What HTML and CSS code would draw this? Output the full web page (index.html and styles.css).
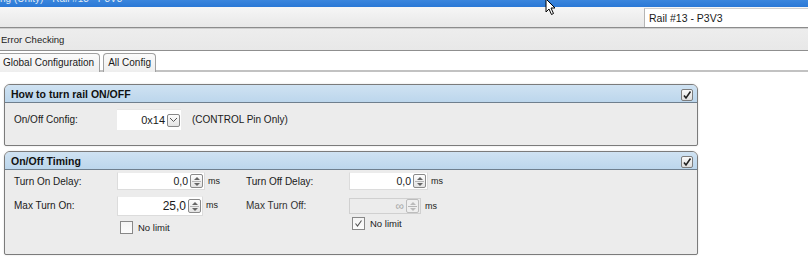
FILE: index.html
```html
<!DOCTYPE html>
<html>
<head>
<meta charset="utf-8">
<link rel="stylesheet" href="styles.css">
</head>
<body>
<div class="app">
  <div class="titlebar"><span class="title-text">ng (Unity) - Rail #13 - P3V3</span></div>
  <div class="toolbar">
    <div class="rail-select">Rail #13 - P3V3</div>
  </div>
  <div class="errbar">Error Checking</div>
  <div class="tabs">
    <div class="tab">Global Configuration</div>
    <div class="tab">All Config</div>
  </div>
  <div class="content">
    <div class="panel panel-onoff">
      <div class="panel-head">
        <span>How to turn rail ON/OFF</span>
        <span class="hcheck"><svg width="10" height="10" viewBox="0 0 10 10"><path d="M2 5.5 L4 8 L8.5 1.5" fill="none" stroke="#222" stroke-width="1.6"/></svg></span>
      </div>
      <div class="panel-body row-config">
        <span class="lbl lbl-config">On/Off Config:</span>
        <div class="combo"><span class="combo-val">0x14</span><span class="combo-btn"><svg width="9" height="6" viewBox="0 0 9 6"><path d="M1 1 L4.5 4.5 L8 1" fill="none" stroke="#555" stroke-width="1"/></svg></span></div>
        <span class="note">(CONTROL Pin Only)</span>
      </div>
    </div>
    <div class="panel panel-timing">
      <div class="panel-head">
        <span>On/Off Timing</span>
        <span class="hcheck"><svg width="10" height="10" viewBox="0 0 10 10"><path d="M2 5.5 L4 8 L8.5 1.5" fill="none" stroke="#222" stroke-width="1.6"/></svg></span>
      </div>
      <div class="panel-body timing-grid">
        <div class="col">
          <div class="field f1">
            <span class="lbl">Turn On Delay:</span>
            <div class="spin w88"><span class="spin-val">0,0</span><span class="spin-btns"><i class="up"></i><i class="dn"></i></span></div>
            <span class="unit">ms</span>
          </div>
          <div class="field f2">
            <span class="lbl">Max Turn On:</span>
            <div class="spin w86 tall"><span class="spin-val big">25,0</span><span class="spin-btns"><i class="up"></i><i class="dn"></i></span></div>
            <span class="unit">ms</span>
          </div>
          <label class="chk"><span class="box"></span>No limit</label>
        </div>
        <div class="col col2">
          <div class="field f1">
            <span class="lbl">Turn Off Delay:</span>
            <div class="spin w79"><span class="spin-val">0,0</span><span class="spin-btns"><i class="up"></i><i class="dn"></i></span></div>
            <span class="unit">ms</span>
          </div>
          <div class="field f2">
            <span class="lbl dis-lbl">Max Turn Off:</span>
            <div class="spin w72 disabled"><span class="spin-val">∞</span><span class="spin-btns"><i class="up"></i><i class="dn"></i></span></div>
            <span class="unit">ms</span>
          </div>
          <label class="chk chk2"><span class="box"><svg width="9" height="9" viewBox="0 0 9 9"><path d="M1.5 4.5 L3.5 7 L7.5 1.5" fill="none" stroke="#555" stroke-width="1.1"/></svg></span>No limit</label>
        </div>
      </div>
    </div>
  </div>
  <svg class="cursor" width="14" height="18" viewBox="0 0 14 18"><path d="M1 1 L1 14 L4 11 L6.5 16.5 L8.5 15.5 L6 10 L10 10 Z" fill="#fff" stroke="#000" stroke-width="1"/></svg>
</div>
</body>
</html>
```
FILE: styles.css
```css
* { box-sizing: border-box; }
html, body { margin: 0; padding: 0; background: #fff; }
body { font-family: "Liberation Sans", sans-serif; font-size: 10px; color: #1a1a1a; }
.app { position: relative; width: 808px; height: 262px; overflow: hidden; }

.titlebar { height: 7px; background: linear-gradient(#3b86dd, #2a78d6); overflow: hidden; position: relative; }
.title-text { position: absolute; left: 0; top: -7px; color: #dfe8f5; font-size: 10px; line-height: 11px; }

.toolbar { height: 21px; background: linear-gradient(#f6f6f6, #e8e8e8); border-bottom: 1px solid #8c8c8c; display: flex; justify-content: flex-end; padding-top: 1px; }
.rail-select { width: 164px; height: 19px; background: #fff; border-left: 1px solid #b5b5b5; border-top: 1px solid #d0d0d0; padding: 3px 0 0 4px; font-size: 10.5px; }

.errbar { height: 23px; background: linear-gradient(#ededed, #e8e8e8); border-top: 1px solid #cfcfcf; border-bottom: 1px solid #8f8f8f; padding: 5px 0 0 1px; font-size: 9.5px; color: #222; }

.tabs { height: 21px; display: flex; gap: 3px; padding-top: 2px; background: #fff; border-bottom: 2px solid #c2c2c2; }
.tab { height: 19px; padding: 3px 4px 0 4px; border: 1px solid #a0a0a0; border-bottom: none; border-radius: 4px 4px 0 0; background: linear-gradient(#fbfbfb, #eeeeee); font-size: 10px; color: #1a1a1a; }
.tab:first-child { border-left: none; border-radius: 0 4px 0 0; padding-left: 3px; padding-right: 5px; }

.content { padding: 12px 0 0 4px; display: flex; flex-direction: column; gap: 5px; }
.panel { width: 694px; border: 1px solid #7b7b7b; border-radius: 6px 6px 2px 2px; background: #ececec; box-shadow: 0 0 2px rgba(0,0,0,0.15); overflow: hidden; }
.panel-head { height: 18px; background: linear-gradient(#cfe2f2, #bcd6ec); border-bottom: 1px solid #6f7f8e; display: flex; justify-content: space-between; align-items: center; padding: 0 4px 0 6px; font-weight: bold; font-size: 10.5px; color: #111; }
.hcheck { width: 12px; height: 12px; border: 1px solid #7d7d7d; border-radius: 2px; background: linear-gradient(#fafafa, #dedede); display: flex; align-items: center; justify-content: center; margin-top: 2px; }

.panel-body { font-size: 10px; }
.panel-onoff .panel-body { height: 42px; }
.row-config { display: flex; align-items: flex-start; padding: 6px 0 0 9px; }
.lbl-config { width: 103px; padding-top: 5px; }
.combo { width: 64px; height: 21px; background: #fff; border-top: 1px solid #e6e6e6; display: flex; align-items: center; justify-content: flex-end; padding-right: 1px; }
.combo-val { padding-right: 2px; font-size: 11px; }
.combo-btn { width: 13px; height: 13px; border: 1px solid #888; border-radius: 2px; background: linear-gradient(#fdfdfd, #e4e4e4); display: flex; align-items: center; justify-content: center; }
.note { padding: 5px 0 0 11px; }

.panel-timing .panel-body { height: 84px; }
.timing-grid { display: flex; padding: 2px 0 0 9px; }
.col { width: 232px; display: flex; flex-direction: column; }
.col2 { width: 240px; }
.field { display: flex; align-items: flex-start; }
.field .lbl { width: 103px; padding-top: 4px; }
.f2 { margin-top: 6px; }
.spin { height: 18px; background: #fff; border: 1px solid #dcdcdc; border-top-color: #ececec; display: flex; align-items: center; justify-content: flex-end; padding-right: 1px; }
.spin.tall { height: 20px; }
.w88 { width: 88px; }
.w86 { width: 86px; }
.w79 { width: 79px; }
.w72 { width: 72px; }
.spin-val { padding-right: 2px; font-size: 10.5px; }
.spin-val.big { font-size: 12px; }
.spin-btns { width: 13px; height: 14px; border: 1px solid #8a8a8a; border-radius: 2px; background: linear-gradient(#fdfdfd, #e3e3e3); display: flex; flex-direction: column; align-items: center; justify-content: space-around; position: relative; }
.spin-btns::after { content: ""; position: absolute; left: 1px; right: 1px; top: 6px; height: 1px; background: #b5b5b5; }
.spin-btns i { width: 0; height: 0; border-left: 3px solid transparent; border-right: 3px solid transparent; }
.spin-btns i.up { border-bottom: 3px solid #666; }
.spin-btns i.dn { border-top: 3px solid #666; }
.unit { padding: 4px 0 0 3px; font-size: 9px; }
.disabled { background: #ececec; border-color: #d0d0d0; width: 72px; height: 16px; margin-top: 2px; }
.disabled .spin-val { color: #a8a8a8; font-size: 12px; }
.disabled .spin-btns { border-color: #bdbdbd; background: #efefef; }
.disabled .spin-btns i.up { border-bottom-color: #bbb; }
.disabled .spin-btns i.dn { border-top-color: #bbb; }
.disabled + .unit { padding-top: 5px; padding-left: 4px; }
.dis-lbl { color: #333; }

.chk { display: flex; align-items: center; gap: 5px; margin: 5px 0 0 106px; font-size: 9.5px; }
.chk2 { margin: 3px 0 0 106px; }
.box { width: 13px; height: 13px; border: 1px solid #888; background: linear-gradient(#f4f4f4, #fcfcfc); display: flex; align-items: center; justify-content: center; }

.cursor { position: absolute; left: 545px; top: -2px; }
```
